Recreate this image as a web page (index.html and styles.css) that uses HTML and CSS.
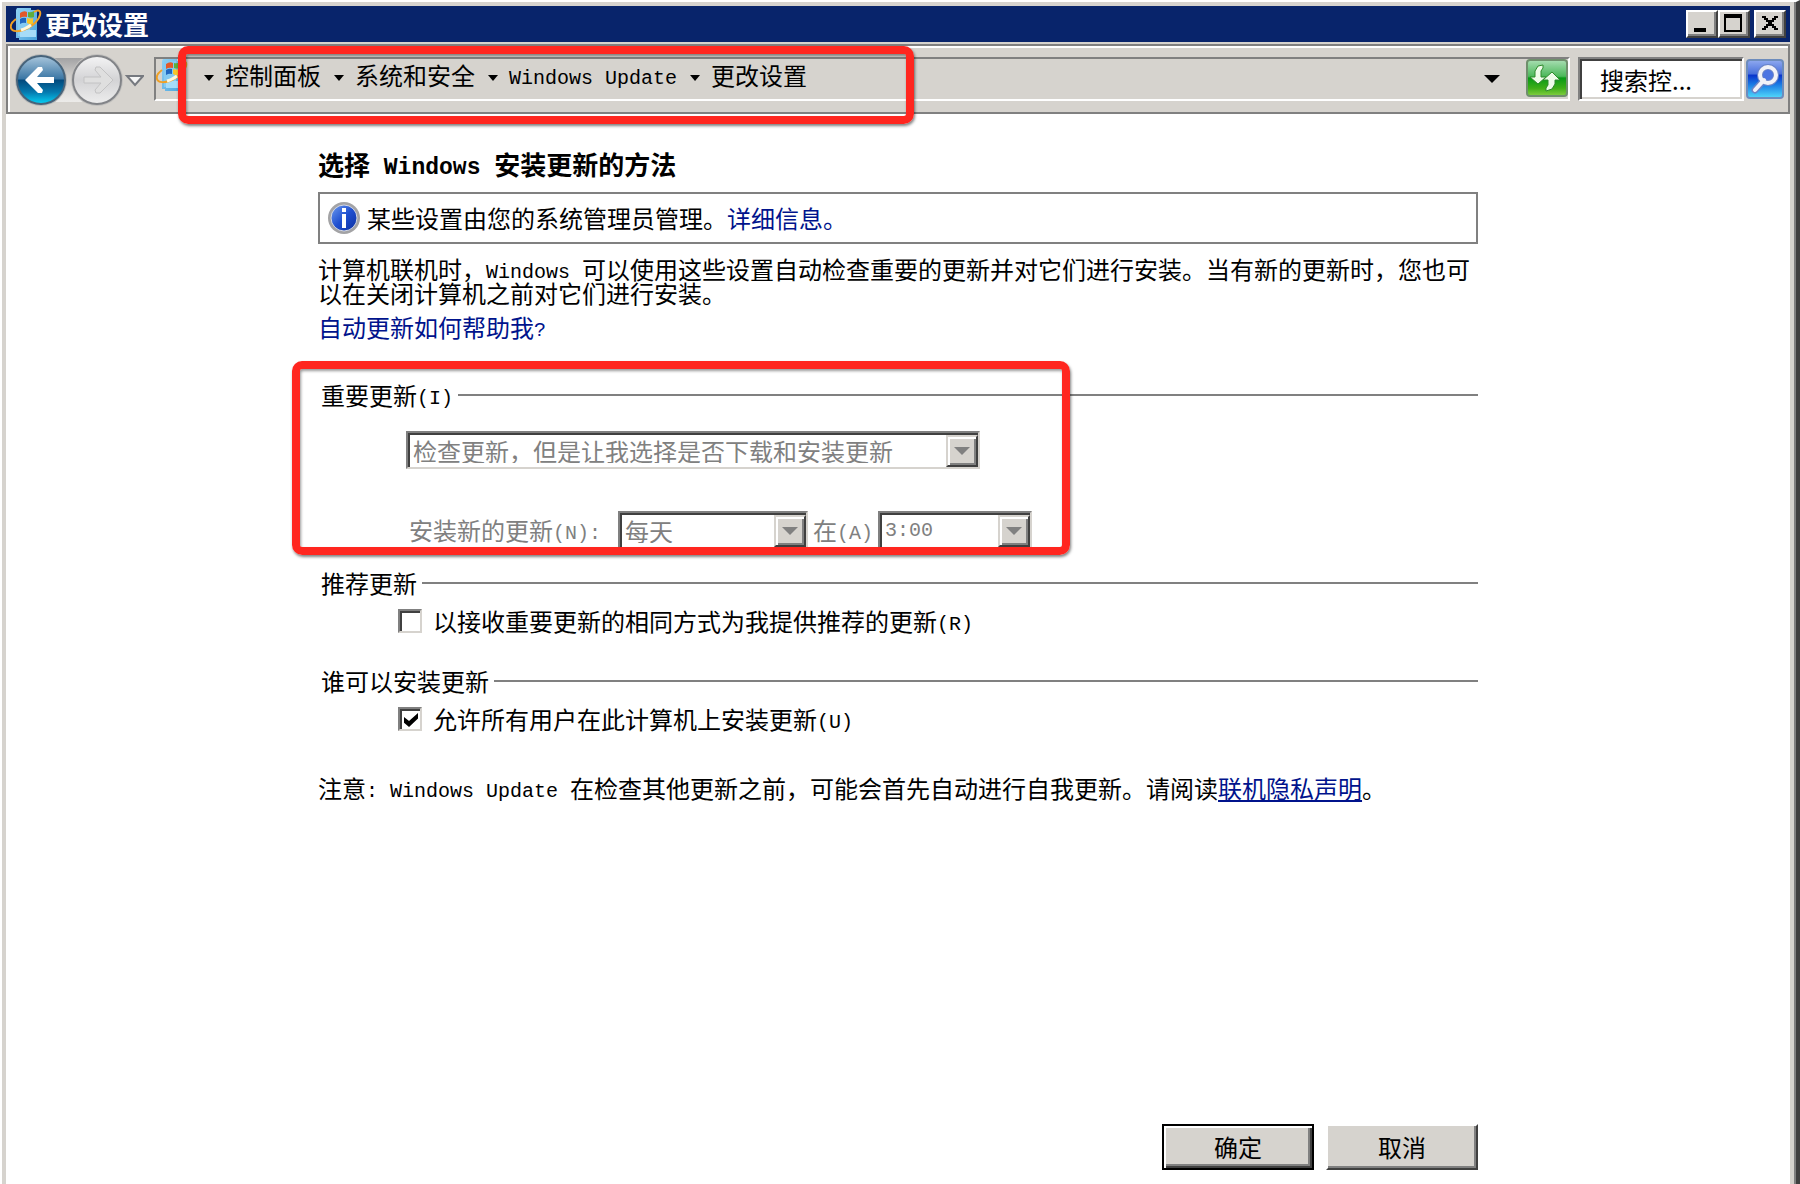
FILE: index.html
```
<!DOCTYPE html>
<html lang="zh-CN">
<head>
  <meta charset="UTF-8">
  <meta name="viewport" content="width=device-width, initial-scale=1.0">
  <title>更改设置</title>
  <link rel="stylesheet" href="styles.css">
</head>
<body>
  <!-- shared icon, used in the title bar and the address bar -->
  <svg class="defs" width="0" height="0">
    <defs>
      <linearGradient id="boxFill" x1="0" y1="0" x2="1" y2="1">
        <stop offset="0" stop-color="#8fd0f4"></stop>
        <stop offset="1" stop-color="#4aa3dc"></stop>
      </linearGradient>
    </defs>
    <symbol id="update" viewBox="0 0 32 32">
      <path d="M7 0h14v2h6v30H9v-2H6V2z" fill="url(#boxFill)"></path>
      <path d="M8 2h12v26H8z" fill="#84caf2"></path>
      <path d="M10 22h16v7H10z" fill="#a6dcf8"></path>
      <path d="M10 5q4-3 7-1v5q-4-1-7 1z" fill="#e2592c"></path>
      <path d="M18 4q3 1 6-1v6q-3 1-6 0z" fill="#5fae3c"></path>
      <path d="M10 11q3-2 6-1v5q-3-1-6 1z" fill="#1f66c0"></path>
      <path d="M17 10q3 1 6 0v6q-3 1-6-1z" fill="#f7c52c"></path>
      <path d="M24 4c5-3 7-1 6 3-1 5-7 11-14 14C9 24 2 24 1 20c-1-3 1-6 5-9" fill="none" stroke="#f0a024" stroke-width="2"></path>
      <path d="M11 22c4-1 7-3 10-5" fill="none" stroke="#fff8dc" stroke-width="3"></path>
    </symbol>
  </svg>

  <div class="window">
    <header class="titlebar">
      <svg class="app-icon"><use href="#update"></use></svg>
      <h1>更改设置</h1>
      <button class="win-btn" aria-label="最小化">
        <svg width="28" height="24"><path d="M6 16h12v4H6z"></path></svg>
      </button>
      <button class="win-btn" aria-label="最大化">
        <svg width="28" height="24"><path d="M4 2h18v18H4zM6 6v12h14V6z" fill-rule="evenodd"></path></svg>
      </button>
      <button class="win-btn close" aria-label="关闭">
        <svg width="28" height="24"><path d="M6 4h4v2h2v2h4V6h2V4h4v2h-2v2h-2v2h-2v2h2v2h2v2h2v2h-4v-2h-2v-2h-4v2h-2v2H6v-2h2v-2h2v-2h2v-2h-2V8H8V6H6z"></path></svg>
      </button>
    </header>

    <nav class="toolbar">
      <svg class="travel" width="132" height="56" viewBox="0 0 132 56">
        <defs>
          <linearGradient id="backTop" x1="0" y1="0" x2="0" y2="1">
            <stop offset="0" stop-color="#a9c6dc"></stop>
            <stop offset="0.48" stop-color="#3a76a4"></stop>
            <stop offset="0.5" stop-color="#02497c"></stop>
            <stop offset="0.75" stop-color="#0579ae"></stop>
            <stop offset="1" stop-color="#06d3f6"></stop>
          </linearGradient>
          <linearGradient id="fwdFill" x1="0" y1="0" x2="0" y2="1">
            <stop offset="0" stop-color="#f4f4f5"></stop>
            <stop offset="0.5" stop-color="#d3d3d5"></stop>
            <stop offset="1" stop-color="#eeeeee"></stop>
          </linearGradient>
          <linearGradient id="pill" x1="0" y1="0" x2="0" y2="1">
            <stop offset="0" stop-color="#a2a2a4"></stop>
            <stop offset="0.4" stop-color="#cfcdca"></stop>
            <stop offset="1" stop-color="#ecebe9"></stop>
          </linearGradient>
        </defs>
        <rect x="24" y="6" width="66" height="44" fill="url(#pill)"></rect>
        <circle cx="29" cy="28" r="26" fill="#b9b9b8"></circle>
        <circle cx="29" cy="28" r="24" fill="url(#backTop)" stroke="#47637a" stroke-width="2"></circle>
        <path d="M13 28l13-13h4l1 3-6 7h17v6H25l6 7-1 3h-4z" fill="#fff"></path>
        <circle cx="85" cy="28" r="26" fill="#c2c1bf"></circle>
        <circle cx="85" cy="28" r="24" fill="url(#fwdFill)" stroke="#828488" stroke-width="2"></circle>
        <path d="M101 28L88 15h-4l-1 3 6 7H72v6h17l-6 7 1 3h4z" fill="#dfdfdf" stroke="#c3c3c4"></path>
        <path d="M115 24h16l-8 9z" fill="#f6f6f6" stroke="#76797f" stroke-width="2"></path>
      </svg>

      <div class="address">
        <svg class="app-icon"><use href="#update"></use></svg>
        <ol class="crumbs">
          <li><a href="#">控制面板</a></li>
          <li><a href="#">系统和安全</a></li>
          <li><a href="#"><span class="en">Windows Update</span></a></li>
          <li><a href="#">更改设置</a></li>
        </ol>
        <button class="history" aria-label="以前的位置"></button>
        <button class="refresh" aria-label="刷新">
          <svg width="36" height="34" viewBox="0 0 36 34">
            <path d="M15 4l-5 1-3 5v6H2l8 7 8-7h-5v-6l2-3z" fill="#eefbe9" stroke="#2f8a2c"></path>
            <path d="M18 30l6-2 3-5v-4h5l-8-8-9 8h5v5l-2 3z" fill="#eefbe9" stroke="#2f8a2c"></path>
          </svg>
        </button>
      </div>

      <form class="search">
        <input type="text" value="搜索控..." aria-label="搜索控制面板">
        <button type="button" aria-label="搜索">
          <svg width="34" height="34" viewBox="0 0 34 34">
            <path d="M7 28l9-10" stroke="#6a84c8" stroke-width="7" stroke-linecap="round"></path>
            <circle cx="20" cy="13" r="8" fill="#4c74e2" stroke="#6a84c8" stroke-width="6"></circle>
            <path d="M7 28l9-10" stroke="#f2f2f8" stroke-width="4" stroke-linecap="round"></path>
            <circle cx="20" cy="13" r="8" fill="none" stroke="#f2f2f8" stroke-width="4"></circle>
          </svg>
        </button>
      </form>
      <div class="mark mark-path"></div>
    </nav>

    <main class="content">
      <h2>选择<span class="en"> Windows </span>安装更新的方法</h2>

      <div class="notice">
        <svg width="32" height="32" viewBox="0 0 32 32">
          <defs>
            <linearGradient id="info" x1="0" y1="0" x2="1" y2="1">
              <stop offset="0" stop-color="#6f9df0"></stop>
              <stop offset="0.5" stop-color="#1f4fd0"></stop>
              <stop offset="1" stop-color="#0c2f9e"></stop>
            </linearGradient>
          </defs>
          <circle cx="16" cy="16" r="16" fill="#a3a3a5"></circle>
          <circle cx="16" cy="16" r="13" fill="url(#info)" stroke="#d5d9e4"></circle>
          <path d="M14 6h4v4h-4zM14 12h4v14h-4z" fill="#fff"></path>
        </svg>
        <p>某些设置由您的系统管理员管理。<a href="#">详细信息。</a></p>
      </div>

      <p class="intro">计算机联机时，<span class="en">Windows </span>可以使用这些设置自动检查重要的更新并对它们进行安装。当有新的更新时，您也可以在关闭计算机之前对它们进行安装。</p>
      <a class="help" href="#">自动更新如何帮助我<span class="en">?</span></a>

      <section class="group important">
        <h3><label for="mode">重要更新<span class="en">(I)</span></label></h3>
        <div class="combo combo-mode">
          <select id="mode" disabled>
            <option>检查更新，但是让我选择是否下载和安装更新</option>
          </select>
        </div>
        <div class="schedule">
          <label class="day-label" for="day">安装新的更新<span class="en">(N):</span></label>
          <div class="combo combo-day">
            <select id="day" disabled>
              <option>每天</option>
            </select>
          </div>
          <label for="time">在<span class="en">(A)</span></label>
          <div class="combo combo-time">
            <select id="time" disabled>
              <option>3:00</option>
            </select>
          </div>
        </div>
        <div class="mark mark-group"></div>
      </section>

      <section class="group">
        <h3>推荐更新</h3>
        <div class="check">
          <input type="checkbox" id="recommended">
          <label for="recommended">以接收重要更新的相同方式为我提供推荐的更新<span class="en">(R)</span></label>
        </div>
      </section>

      <section class="group">
        <h3>谁可以安装更新</h3>
        <div class="check">
          <input type="checkbox" id="allusers" checked>
          <label for="allusers">允许所有用户在此计算机上安装更新<span class="en">(U)</span></label>
        </div>
      </section>

      <p class="note">注意<span class="en">: Windows Update </span>在检查其他更新之前，可能会首先自动进行自我更新。请阅读<a href="#">联机隐私声明</a>。</p>

      <footer class="actions">
        <button class="btn default">确定</button>
        <button class="btn">取消</button>
      </footer>
    </main>
  </div>
</body>
</html>
```

FILE: styles.css
```
*, *::before, *::after {
  box-sizing: border-box;
}
body {
  margin: 0;
  font-family: "Noto Sans CJK SC", sans-serif;
  font-size: 24px;
  line-height: 24px;
  color: #000;
  background: #fff;
}
h1, h2, h3, p, ol {
  margin: 0;
  padding: 0;
}
a {
  color: #00138c;
  text-decoration: none;
}
button, input, select {
  font: inherit;
  color: inherit;
  margin: 0;
  padding: 0;
  border-radius: 0;
}
svg {
  display: block;
  flex: none;
}
.defs {
  position: absolute;
}
/* half-width latin next to the 24px chinese glyphs */
.en {
  font-family: "Liberation Mono", monospace;
  font-size: 20px;
  line-height: 0;
  vertical-align: 1px;
  white-space: pre-wrap;
}

.window {
  display: flex;
  flex-direction: column;
  min-height: 100vh;
  padding: 4px 6px 0 4px;
  border: solid #fff;
  border-width: 2px 0 0 2px;
  border-right: 4px solid #404040;
  background: linear-gradient(to left, #808080 2px, #d6d3ce 2px);
}

/* title bar */
.titlebar {
  display: flex;
  align-items: center;
  height: 36px;
  padding: 0 4px;
  background: #08246b;
}
.app-icon {
  width: 32px;
  height: 32px;
}
.titlebar h1 {
  flex: 1;
  margin-left: 3px;
  font-size: 26px;
  font-weight: 700;
  line-height: 30px;
  color: #fff;
}
.win-btn {
  width: 32px;
  height: 28px;
  border: 2px solid;
  border-color: #fff #404040 #404040 #fff;
  background: #d6d3ce;
  box-shadow: inset -2px -2px #808080;
}
.win-btn.close {
  margin-left: 4px;
}

/* toolbar */
.toolbar {
  position: relative;
  display: flex;
  align-items: center;
  height: 70px;
  margin-top: 2px;
  padding: 0 4px 0 2px;
  border: 2px solid #808080;
  box-shadow: inset 2px 2px #fff;
  background: #d6d3ce;
}
.travel {
  margin: 2px 10px 0 2px;
}
.address {
  display: flex;
  flex: 1;
  height: 44px;
  border: 2px solid;
  border-color: #808080 #fff #fff #808080;
}
.crumbs {
  display: flex;
  flex: 1;
  padding-left: 3px;
  list-style: none;
}
.crumbs li {
  display: flex;
  align-items: center;
  height: 32px;
}
.crumbs li::before {
  content: "";
  width: 10px;
  height: 6px;
  margin: 6px 11px 0 13px;
  background: #000;
  clip-path: polygon(0 0, 100% 0, 50% 100%);
}
.crumbs a {
  color: #000;
}
.history {
  width: 42px;
  border: 0;
  background: none;
}
.history::before {
  content: "";
  display: block;
  width: 16px;
  height: 8px;
  background: #000;
  clip-path: polygon(0 0, 100% 0, 50% 100%);
}
.refresh {
  width: 42px;
  height: 38px;
  border: 2px solid #6f8f6c;
  border-radius: 4px;
  background: linear-gradient(#a3dcae, #4cb85a 45%, #079a16 50%, #3fae18 80%, #7ccc3c);
}
.search {
  display: flex;
  align-items: center;
  gap: 2px;
  margin-left: 8px;
}
.search input {
  width: 166px;
  height: 44px;
  padding-left: 20px;
  border: 2px solid;
  border-color: #808080 #fff #fff #808080;
  box-shadow: inset 2px 2px #404040, inset -2px -2px #d6d3ce;
  background: #fff;
}
.search button {
  width: 38px;
  height: 40px;
  border: 2px solid #6d8cbc;
  border-radius: 4px;
  background: linear-gradient(#8ba6ee, #4a70dc 35%, #0a35cc 40%, #1a7ae4 65%, #4ed4fa);
}

/* red highlight frames lying over the page */
.mark {
  position: absolute;
  border: 8px solid #ff261f;
  border-radius: 10px;
  box-shadow: 1px 2px 3px rgba(0, 0, 0, 0.5), inset 1px 2px 3px rgba(0, 0, 0, 0.4);
  pointer-events: none;
}
.mark-path {
  top: 0;
  left: 170px;
  width: 736px;
  height: 78px;
}
.mark-group {
  top: -22px;
  left: -26px;
  width: 778px;
  height: 194px;
}

/* page */
.content {
  flex: 1;
  display: flex;
  flex-direction: column;
  padding: 37px max(20px, calc(50% - 580px)) 14px;
  background: #fff;
}
h2 {
  font-size: 26px;
  line-height: 26px;
}
h2 .en {
  font-size: 23px;
}
.notice {
  display: flex;
  align-items: center;
  gap: 7px;
  height: 52px;
  margin-top: 15px;
  padding-left: 8px;
  border: 2px solid #808080;
}
.intro {
  margin-top: 13px;
}
.help {
  align-self: flex-start;
  margin-top: 10px;
}
.group {
  position: relative;
  margin-top: 36px;
}
.group h3 {
  display: flex;
  align-items: center;
  gap: 5px;
  padding-left: 3px;
  font-size: 24px;
  font-weight: 400;
}
.group h3::after {
  content: "";
  flex: 1;
  height: 2px;
  background: #808080;
}
.important {
  margin-top: 44px;
}
.important + .group {
  margin-top: 22px;
}
.combo {
  position: relative;
  height: 38px;
  border: 2px solid;
  border-color: #808080 #d6d3ce #d6d3ce #808080;
}
.combo select {
  display: block;
  width: 100%;
  height: 34px;
  padding: 0 32px 0 3px;
  appearance: none;
  border: solid #404040;
  border-width: 2px 0 0 2px;
  background: #fff;
  color: #808080;
  opacity: 1;
}
.combo::before {
  content: "";
  position: absolute;
  top: 2px;
  right: 0;
  width: 32px;
  height: 32px;
  border: 2px solid;
  border-color: #d6d3ce #404040 #404040 #d6d3ce;
  box-shadow: inset 2px 2px #fff, inset -2px -2px #808080;
  background: #d6d3ce;
  pointer-events: none;
}
.combo::after {
  content: "";
  position: absolute;
  top: 14px;
  right: 8px;
  width: 16px;
  height: 8px;
  background: #808080;
  clip-path: polygon(0 0, 100% 0, 50% 100%);
  pointer-events: none;
}
.combo-mode {
  width: 574px;
  margin: 24px 0 0 88px;
}
.combo-day {
  width: 190px;
}
.combo-time {
  width: 154px;
}
.combo-time select {
  font-family: "Liberation Mono", monospace;
  font-size: 20px;
}
.schedule {
  display: flex;
  align-items: center;
  gap: 5px;
  margin: 42px 0 0 91px;
  color: #808080;
}
.day-label {
  width: 204px;
}
.check {
  display: flex;
  align-items: center;
  gap: 11px;
  margin: 14px 0 0 80px;
}
.check input {
  width: 24px;
  height: 24px;
  appearance: none;
  border: 2px solid;
  border-color: #808080 #d6d3ce #d6d3ce #808080;
  box-shadow: inset 2px 2px #404040;
  background: #fff;
}
.check input:checked::before {
  content: "";
  display: block;
  width: 14px;
  height: 14px;
  margin: 4px;
  background: #000;
  clip-path: polygon(0 28%, 36% 58%, 100% 0, 100% 40%, 36% 100%, 0 70%);
}
.note {
  margin-top: 45px;
}
.note a {
  text-decoration: underline;
}
.actions {
  display: flex;
  justify-content: flex-end;
  gap: 12px;
  margin-top: auto;
}
.btn {
  width: 152px;
  height: 46px;
  border: 2px solid;
  border-color: #fff #404040 #404040 #fff;
  box-shadow: inset -2px -2px #808080;
  background: #d6d3ce;
}
.btn.default {
  border-color: #000;
  box-shadow: inset 2px 2px #fff, inset -2px -2px #404040, inset -4px -4px #808080;
}
```
